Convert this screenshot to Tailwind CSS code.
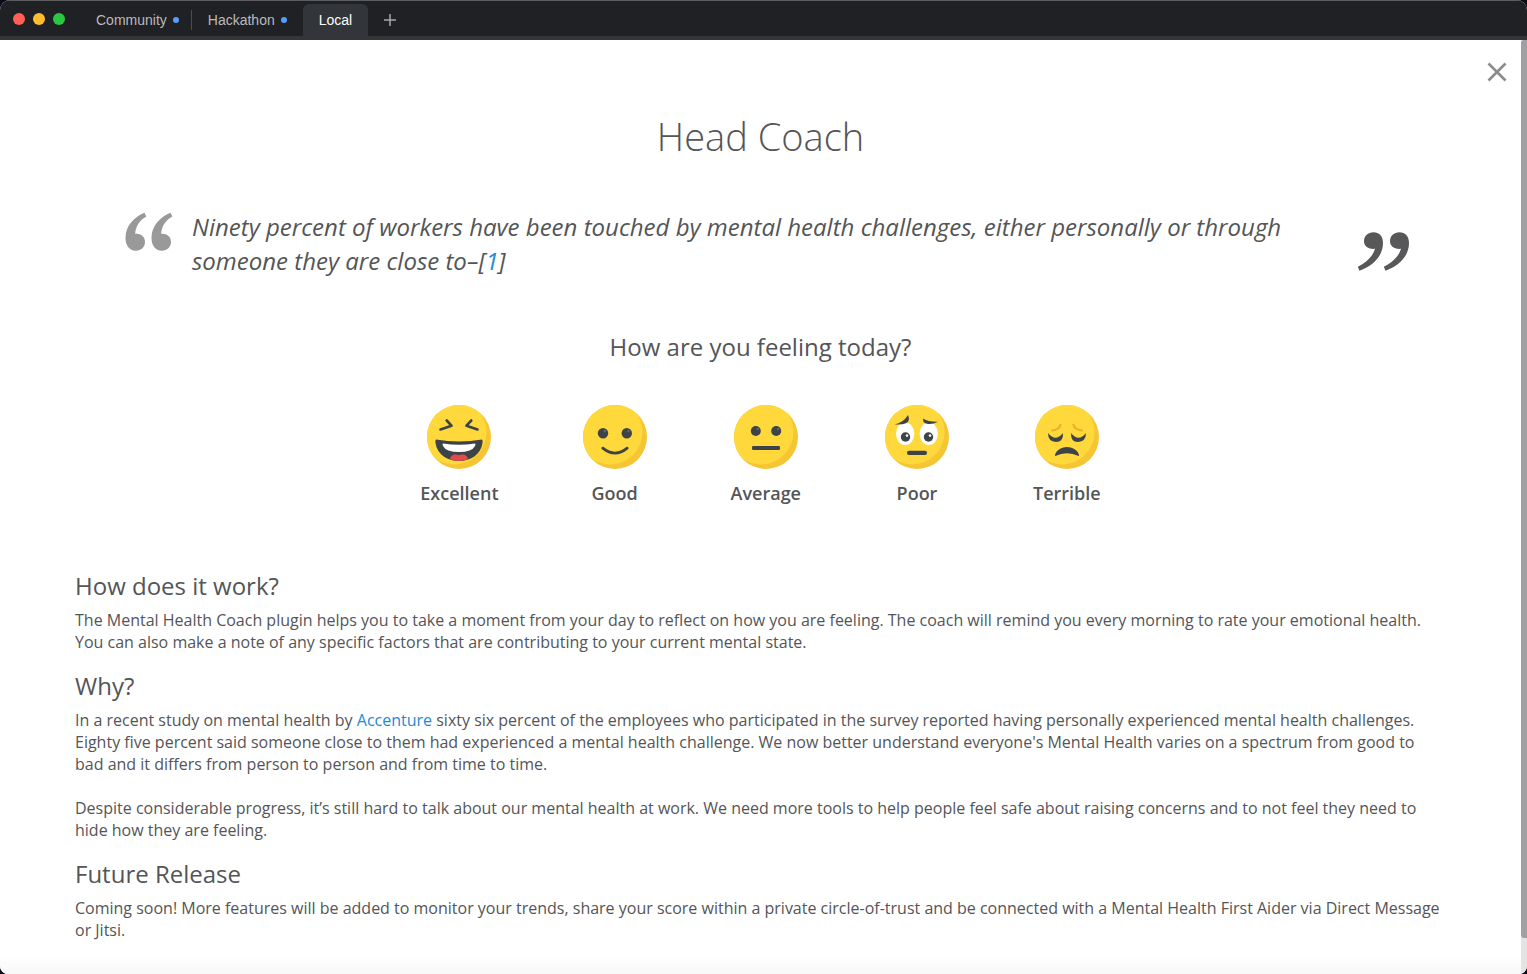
<!DOCTYPE html>
<html lang="en">
<head>
<meta charset="utf-8">
<meta name="viewport" content="width=device-width, initial-scale=1">
<title>Head Coach</title>
<script src="https://cdn.jsdelivr.net/npm/@tailwindcss/browser@4"></script>
</head>
<body class="bg-[#0c0b1a] font-['Open_Sans',sans-serif] text-[#545557]">
<div class="flex min-h-screen flex-col overflow-hidden rounded-t-[10px] rounded-b-lg bg-white">
  <header class="flex h-10 items-end border-t border-b-4 border-t-[#5b5d61] border-b-[#323539] bg-[#202124] pl-[13px] font-['Liberation_Sans',sans-serif] text-sm text-[#b9babc]">
    <div class="mr-[19px] flex gap-2 self-center pt-px">
      <button aria-label="Close window" class="size-3 rounded-full bg-[#ff5f57]"></button>
      <button aria-label="Minimize window" class="size-3 rounded-full bg-[#febc2e]"></button>
      <button aria-label="Zoom window" class="size-3 rounded-full bg-[#28c840]"></button>
    </div>
    <nav class="flex h-8 items-center" aria-label="Servers">
      <button class="flex h-5 items-center gap-[6px] border-r border-[#4a4c50] px-3">Community<span class="size-[6px] rounded-full bg-[#579dff]"></span></button>
      <button class="flex h-5 items-center gap-[6px] pr-4 pl-4">Hackathon<span class="size-[6px] rounded-full bg-[#579dff]"></span></button>
      <button class="h-8 rounded-t-md bg-[#323539] px-4 text-white">Local</button>
      <button aria-label="Add server" class="ml-4">
        <svg class="size-3" viewBox="0 0 12 12" stroke="#a6a7aa" stroke-width="1.5"><path d="M6 0v12M0 6h12"/></svg>
      </button>
    </nav>
  </header>

  <div class="flex flex-1">
    <main class="relative flex-1 bg-linear-to-t from-[#f8f8f8] to-white to-[18px] px-[75px] pt-[69px] pb-8">
      <button aria-label="Close" class="absolute top-[22px] right-[14px]">
        <svg class="size-5" viewBox="0 0 20 20" stroke="#8b8b8b" stroke-width="2.6"><path d="M1.500 1.500l17 17M18.500 1.500l-17 17"/></svg>
      </button>
      <h1 class="text-center text-[38px] leading-[54px] font-light">Head Coach</h1>

      <blockquote class="mt-[47px] flex items-start pr-9 pl-[50px]">
        <svg class="mt-[2px] h-10 w-12 shrink-0" viewBox="0 0 48 40" fill="#99999a" aria-hidden="true">
          <path id="open-mark" d="M19.500 .8L21.300 4.500C15 8 10.500 14 10.200 22C16 21 20 25 20 30C20 35 16 38.700 11 38.700C4 38.700 .500 33 .500 26C.500 14 9 5 19.500 .8Z"/>
          <use href="#open-mark" x="26"/>
        </svg>
        <p class="mx-[19px] flex-1 text-2xl leading-[34px] italic">Ninety percent of workers have been touched by mental health challenges, either personally or through someone they are close to–[<a href="#" class="text-[#2389d7]">1</a>]</p>
        <svg class="mt-[22px] h-10 w-[53px] shrink-0" viewBox="0 0 53 40" fill="#58585a" aria-hidden="true">
          <path id="close-mark" d="M.8 34.700L2.500 38.700C16 34 26 24 26 11C26 4 22 .3 16.500 .3C11 .3 7 4 7 9C7 14 11 17.500 18 16.800C16 24 9 31 .8 34.700Z"/>
          <use href="#close-mark" x="26"/>
        </svg>
      </blockquote>

      <section class="mt-[52px]">
        <h2 class="text-center text-2xl leading-[34px]">How are you feeling today?</h2>
        <div class="mt-[41px] flex justify-center gap-[84px] text-lg leading-[24px] font-semibold">
          <button class="flex flex-col items-center gap-3">
            <svg class="size-16" viewBox="0 0 64 64" aria-hidden="true">
              <defs><clipPath id="face"><circle cx="32" cy="32" r="32"/></clipPath></defs>
              <g id="head" clip-path="url(#face)"><path fill="#f5c534" d="M0 0h64v64H0z"/><circle cx="27" cy="27" r="32.500" fill="#ffd83b"/></g>
              <path d="M19.700 15.500l4.800 5.200L13.500 24.500M44.300 15.500l-4.800 5.200L50.500 24.500" fill="none" stroke="#3e4347" stroke-width="2.600" stroke-linecap="round" stroke-linejoin="round"/>
              <path d="M9 34.500Q32 38.500 55 34.500Q56 35 55.500 38C54 49 44 56 32 56S10 49 8.500 38Q8 35 9 34.500Z" fill="#3e4347"/>
              <path d="M16 38.600Q32 41 48 38.600Q49 39 48 41Q45 47 32 47T16 41Q15 39 16 38.600Z" fill="#fff"/>
              <path d="M23 54.200C24 49 29 49 32 50.300C35 49 40 49 41 54.200Q32 57.800 23 54.200Z" fill="#e24b4b"/>
            </svg>
            Excellent
          </button>
          <button class="flex flex-col items-center gap-3">
            <svg class="size-16" viewBox="0 0 64 64" aria-hidden="true">
              <use href="#head"/>
              <circle cx="20" cy="28.200" r="5.200" fill="#3e4347"/><circle cx="43.800" cy="28.200" r="5.200" fill="#3e4347"/>
              <circle cx="21.800" cy="26" r="1.200" fill="#62676a"/><circle cx="45.600" cy="26" r="1.200" fill="#62676a"/>
              <path d="M19.800 43.200Q32 53 44.200 43.200" fill="none" stroke="#3e4347" stroke-width="2.800" stroke-linecap="round"/>
            </svg>
            Good
          </button>
          <button class="flex flex-col items-center gap-3">
            <svg class="size-16" viewBox="0 0 64 64" aria-hidden="true">
              <use href="#head"/>
              <circle cx="21.800" cy="26" r="5" fill="#3e4347"/><circle cx="42.200" cy="26" r="5" fill="#3e4347"/>
              <circle cx="23.700" cy="24" r="1.200" fill="#62676a"/><circle cx="44" cy="24" r="1.200" fill="#62676a"/>
              <rect x="18" y="41" width="28" height="4" rx="1.300" fill="#3e4347"/>
            </svg>
            Average
          </button>
          <button class="flex flex-col items-center gap-3">
            <svg class="size-16" viewBox="0 0 64 64" aria-hidden="true">
              <use href="#head"/>
              <ellipse cx="20.200" cy="28.700" rx="9.200" ry="11.300" fill="#fff"/><ellipse cx="43.800" cy="28.700" rx="9.200" ry="11.300" fill="#fff"/>
              <path d="M9.500 19.500Q18 18 23 10Q25.500 16 21 18.300Q17 20 9.500 19.500ZM53 16.800Q43 17 38.200 13.500Q37.500 18 42 18.800Q47 19.800 53 16.800Z" fill="#3e4347"/>
              <circle cx="20.500" cy="32" r="4.700" fill="#3e4347"/><circle cx="43.500" cy="32" r="4.700" fill="#3e4347"/>
              <circle cx="22" cy="30.600" r="1.300" fill="#fff"/><circle cx="45" cy="30.600" r="1.300" fill="#fff"/>
              <rect x="22" y="45.800" width="20" height="4.200" rx="2" fill="#3e4347"/>
            </svg>
            Poor
          </button>
          <button class="flex flex-col items-center gap-3">
            <svg class="size-16" viewBox="0 0 64 64" aria-hidden="true">
              <use href="#head"/>
              <path d="M17 25.500Q24 25 25.600 19.800M47 25.500Q40 25 38.400 19.800" fill="none" stroke="#eaae2b" stroke-width="2.200" stroke-linecap="round"/>
              <path d="M13 28Q20.500 37.500 28 28Q28.500 37 21 37Q13 36.500 13 28ZM51 28Q43.500 37.500 36 28Q35.500 37 43 37Q51 36.500 51 28Z" fill="#3e4347"/>
              <path d="M20.300 51Q19.500 50.500 20.500 48.500Q24 42 32 42T43.500 48.500Q44.500 50.500 43.700 51Q32 45.500 20.300 51Z" fill="#3e4347"/>
            </svg>
            Terrible
          </button>
        </div>
      </section>

      <section class="mt-16">
        <h2 class="text-2xl leading-[34px]">How does it work?</h2>
        <p class="mt-[6px] leading-[22px]">The Mental Health Coach plugin helps you to take a moment from your day to reflect on how you are feeling. The coach will remind you every morning to rate your emotional health. You can also make a note of any specific factors that are contributing to your current mental state.</p>
      </section>
      <section class="mt-4">
        <h2 class="text-2xl leading-[34px]">Why?</h2>
        <p class="mt-[6px] leading-[22px]">In a recent study on mental health by <a href="#" class="text-[#2389d7]">Accenture</a> sixty six percent of the employees who participated in the survey reported having personally experienced mental health challenges. Eighty five percent said someone close to them had experienced a mental health challenge. We now better understand everyone's Mental Health varies on a spectrum from good to bad and it differs from person to person and from time to time.</p>
        <p class="mt-[22px] leading-[22px]">Despite considerable progress, it’s still hard to talk about our mental health at work. We need more tools to help people feel safe about raising concerns and to not feel they need to hide how they are feeling.</p>
      </section>
      <section class="mt-4">
        <h2 class="text-2xl leading-[34px]">Future Release</h2>
        <p class="mt-[6px] leading-[22px]">Coming soon! More features will be added to monitor your trends, share your score within a private circle-of-trust and be connected with a Mental Health First Aider via Direct Message or Jitsi.</p>
      </section>
    </main>
    <div class="w-[6px] bg-[#e4e4e4] pb-9" aria-hidden="true">
      <div class="h-full rounded-l-[3px] bg-[#a0a0a2]"></div>
    </div>
  </div>
</div>
</body>
</html>
